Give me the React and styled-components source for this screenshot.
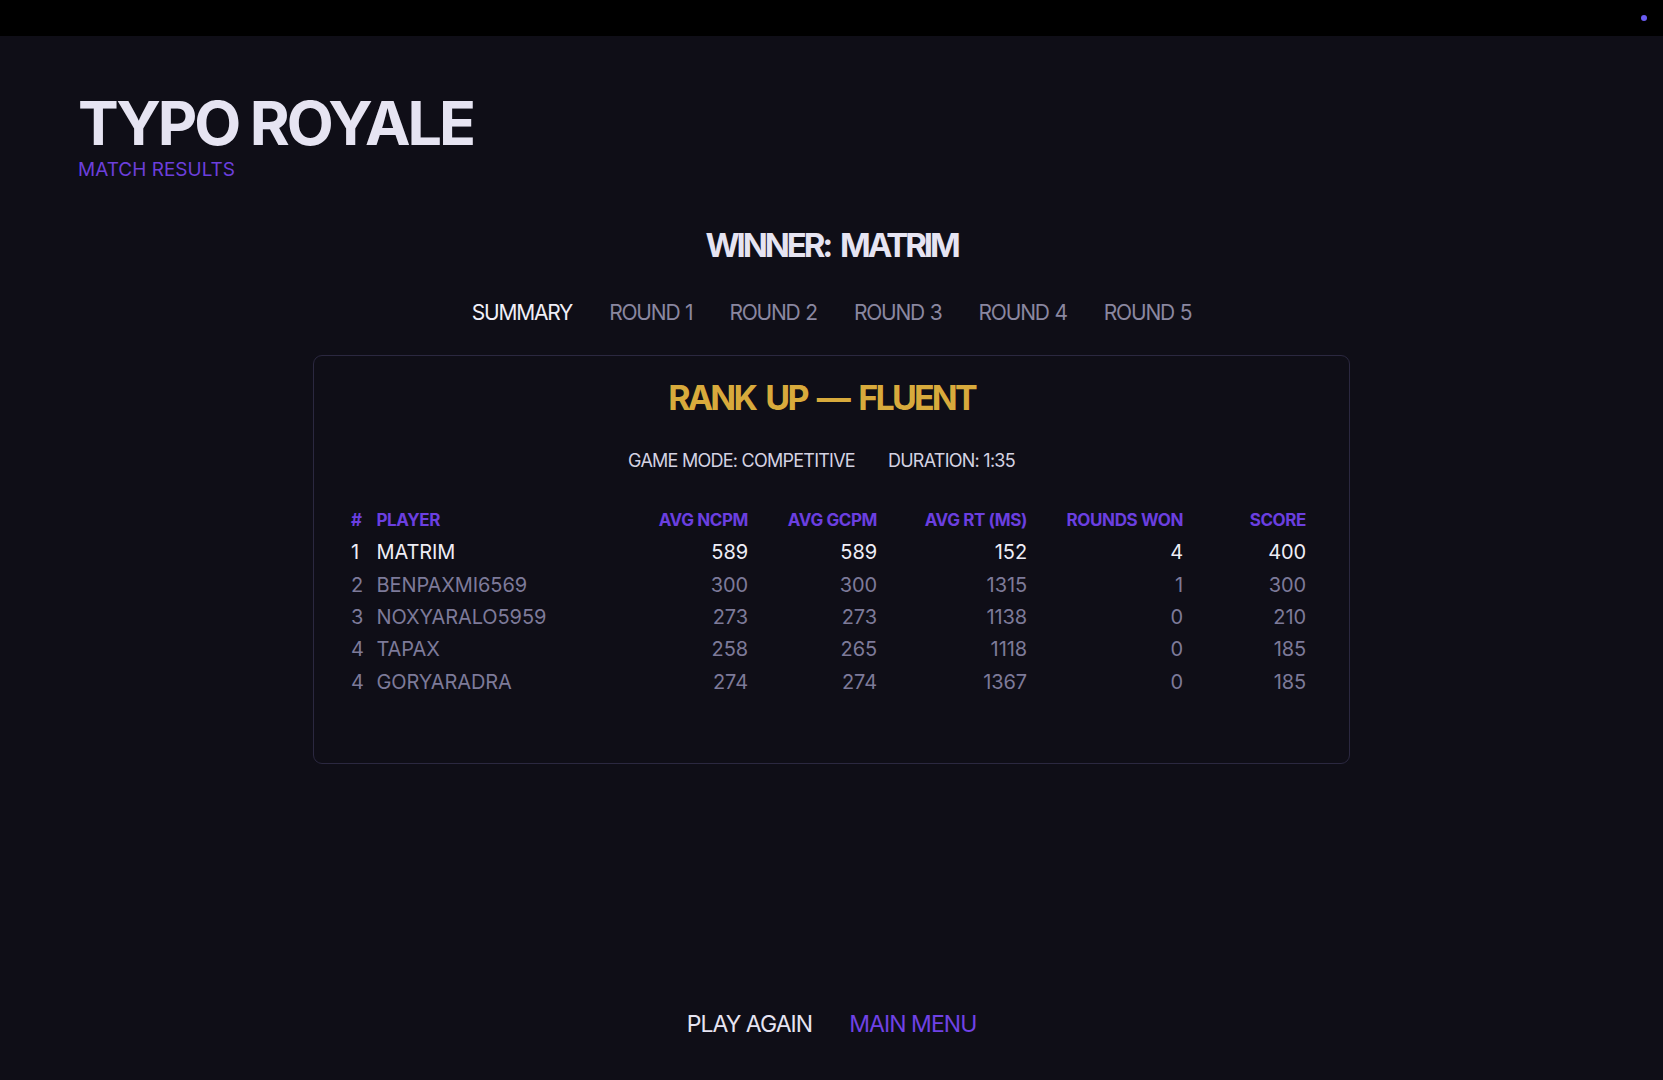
import React from "react";
import styled, { createGlobalStyle } from "styled-components";

const GlobalStyle = createGlobalStyle`
  html, body { margin: 0; padding: 0; background: #0f0e17; }
  body { font-family: Inter, "Noto Sans", sans-serif; color: #e6e4f2; }
  * { box-sizing: border-box; }
`;

const Page = styled.div`
  min-height: 100vh;
  display: flex;
  flex-direction: column;
  background: #0f0e17;
`;

const TopBar = styled.div`
  height: 36px;
  background: #000;
  display: flex;
  align-items: center;
  justify-content: flex-end;
  padding-right: 16px;
  flex-shrink: 0;
`;

const StatusDot = styled.span`
  width: 6px;
  height: 6px;
  border-radius: 50%;
  background: #6a5cf2;
`;

const Header = styled.header`
  padding: 57px 78px 0;
  display: flex;
  flex-direction: column;
  gap: 6px;
`;

const Title = styled.h1`
  margin: 0;
  font-size: 61px;
  line-height: 1;
  font-weight: 700;
  letter-spacing: -3px;
  color: #e6e4f2;
`;

const Subtitle = styled.div`
  font-size: 19px;
  line-height: 1;
  color: #6c3fdc;
`;

const Main = styled.main`
  display: flex;
  flex-direction: column;
  align-items: center;
  padding-top: 50px;
`;

const Winner = styled.h2`
  margin: 0;
  font-size: 33px;
  line-height: 1;
  font-weight: 700;
  letter-spacing: -3.1px;
  word-spacing: 5px;
  color: #e6e4f2;
`;

const Tabs = styled.nav`
  display: flex;
  gap: 37px;
  margin-top: 40px;
`;

const Tab = styled.button`
  background: none;
  border: none;
  padding: 0;
  font-family: inherit;
  font-size: 21px;
  letter-spacing: -1.2px;
  word-spacing: 1px;
  line-height: 1;
  color: ${(p) => (p.$active ? "#f0eff8" : "#8a87a0")};
  cursor: pointer;
`;

const Panel = styled.section`
  margin-top: 32px;
  width: 1037px;
  border: 1px solid #2b2840;
  border-radius: 9px;
  padding: 25px 43px 65px 37px;
  display: flex;
  flex-direction: column;
  align-items: center;
`;

const RankUp = styled.h3`
  margin: 0;
  padding-right: 14px;
  font-size: 34px;
  line-height: 1;
  font-weight: 700;
  letter-spacing: -2.8px;
  word-spacing: 5px;
  color: #d8aa3c;
`;

const Meta = styled.div`
  margin-top: 37px;
  padding-right: 14px;
  display: flex;
  gap: 33px;
  font-size: 18px;
  letter-spacing: -0.75px;
  line-height: 1;
  color: #d4d2e2;
`;

const Table = styled.div`
  margin-top: 35px;
  width: 100%;
  display: flex;
  flex-direction: column;
`;

const Row = styled.div`
  display: grid;
  grid-template-columns: 25.5px 1fr 130px 129px 150px 156px 123px;
  height: ${(p) => (p.$head ? "31px" : "32.4px")};
  align-items: center;
  font-size: ${(p) => (p.$head ? "17px" : "20px")};
  letter-spacing: ${(p) => (p.$head ? "-0.4px" : "-0.1px")};
  font-weight: ${(p) => (p.$head ? 700 : 400)};
  color: ${(p) => (p.$head ? "#6b3fe0" : p.$top ? "#eeedf6" : "#7d7a99")};
  line-height: 1;
`;

const Cell = styled.div`
  text-align: ${(p) => (p.$num ? "right" : "left")};
  white-space: nowrap;
`;

const Footer = styled.footer`
  margin-top: auto;
  padding-bottom: 44px;
  display: flex;
  justify-content: center;
  gap: 37px;
`;

const Action = styled.button`
  background: none;
  border: none;
  padding: 0;
  font-family: inherit;
  font-size: 23px;
  letter-spacing: -0.95px;
  line-height: 1;
  color: ${(p) => (p.$primary ? "#7042e6" : "#e6e4f2")};
  cursor: pointer;
`;

const players = [
  ["1", "MATRIM", "589", "589", "152", "4", "400"],
  ["2", "BENPAXMI6569", "300", "300", "1315", "1", "300"],
  ["3", "NOXYARALO5959", "273", "273", "1138", "0", "210"],
  ["4", "TAPAX", "258", "265", "1118", "0", "185"],
  ["4", "GORYARADRA", "274", "274", "1367", "0", "185"],
];

const headers = ["#", "PLAYER", "AVG NCPM", "AVG GCPM", "AVG RT (MS)", "ROUNDS WON", "SCORE"];
const tabs = ["SUMMARY", "ROUND 1", "ROUND 2", "ROUND 3", "ROUND 4", "ROUND 5"];

export default function App() {
  return (
    <Page>
      <GlobalStyle />
      <TopBar>
        <StatusDot />
      </TopBar>
      <Header>
        <Title>TYPO ROYALE</Title>
        <Subtitle>MATCH RESULTS</Subtitle>
      </Header>
      <Main>
        <Winner>WINNER: MATRIM</Winner>
        <Tabs>
          {tabs.map((t, i) => (
            <Tab key={t} $active={i === 0}>{t}</Tab>
          ))}
        </Tabs>
        <Panel>
          <RankUp>RANK UP — FLUENT</RankUp>
          <Meta>
            <span>GAME MODE: COMPETITIVE</span>
            <span>DURATION: 1:35</span>
          </Meta>
          <Table>
            <Row $head>
              {headers.map((h, i) => (
                <Cell key={h} $num={i > 1}>{h}</Cell>
              ))}
            </Row>
            {players.map((p, r) => (
              <Row key={p[1]} $top={r === 0}>
                {p.map((v, i) => (
                  <Cell key={i} $num={i > 1}>{v}</Cell>
                ))}
              </Row>
            ))}
          </Table>
        </Panel>
      </Main>
      <Footer>
        <Action>PLAY AGAIN</Action>
        <Action $primary>MAIN MENU</Action>
      </Footer>
    </Page>
  );
}
